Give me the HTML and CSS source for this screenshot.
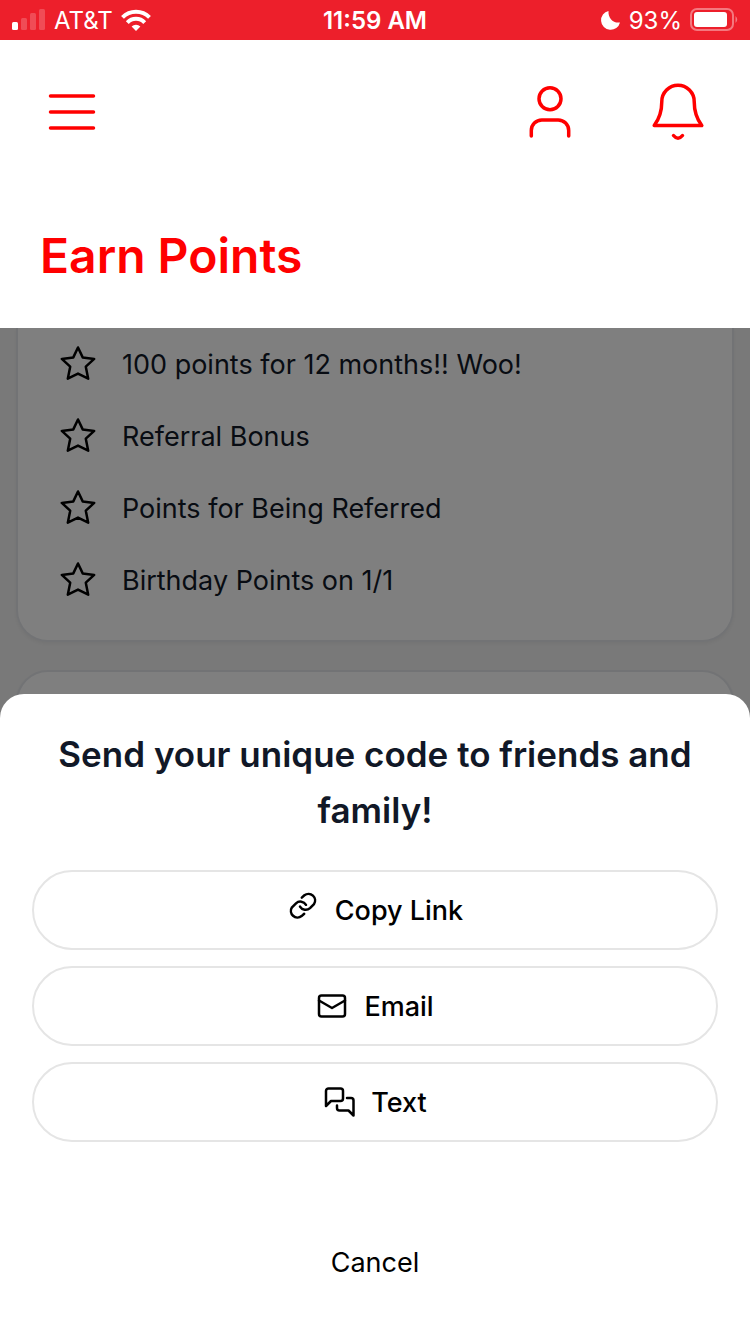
FILE: index.html
```
<!DOCTYPE html>
<html lang="en">
<head>
    <meta charset="UTF-8">
    <meta name="viewport" content="width=device-width, initial-scale=1.0">
    <title>Earn Points</title>
    <link rel="stylesheet" href="styles.css">
</head>
<body>
    <svg class="sprite" aria-hidden="true">
        <symbol id="star" viewBox="0 0 40 40">
            <path d="M20 3.5l4.7 9.9 11.5 1.5-8.4 7.8 2.4 12L20 29.6 9.8 34.700l2.400-12-8.400-7.800 11.500-1.500z" fill="none" stroke="currentColor" stroke-width="2.5" stroke-linejoin="round"/>
        </symbol>
    </svg>

    <div class="status-bar">
        <div class="status-left">
            <svg class="signal" viewBox="0 0 34 22" fill="#fff">
                <rect x="0" y="13" width="6" height="8" rx="1.5"/>
                <g opacity="0.2">
                    <rect x="9" y="9" width="6" height="12" rx="1.5"/>
                    <rect x="18" y="4" width="6" height="17" rx="1.5"/>
                    <rect x="27" y="0" width="6" height="21" rx="1.5"/>
                </g>
            </svg>
            <span>AT&amp;T</span>
            <svg class="wifi" viewBox="0 0 30 22" fill="none" stroke="#fff" stroke-width="4">
                <path d="M1.5 8.3a19 19 0 0 1 27 0"/>
                <path d="M6.3 13.600a12 12 0 0 1 17.400 0"/>
                <path d="M10.600 17.600a6.200 6.200 0 0 1 8.800 0L15 22z" fill="#fff" stroke="none"/>
            </svg>
        </div>
        <span class="status-time">11:59 AM</span>
        <div class="status-right">
            <svg class="moon" viewBox="0 0 20 20" fill="#fff">
                <path d="M7.500 0.900C7 8 12 13.500 19 12.500A9.600 9.600 0 1 1 7.500 0.900z"/>
            </svg>
            <span>93%</span>
            <svg class="battery" viewBox="0 0 48 24">
                <rect x="1" y="1" width="42" height="21" rx="6" fill="none" stroke="#fff" stroke-opacity="0.4" stroke-width="2"/>
                <rect x="4" y="4" width="33" height="15" rx="3" fill="#fff"/>
                <path d="M45.500 8q3.500 3.500 0 7z" fill="#fff" fill-opacity="0.4"/>
            </svg>
        </div>
    </div>

    <header class="header">
        <nav class="nav">
            <button class="icon-button" aria-label="Menu">
                <svg viewBox="0 0 64 64">
                    <path d="M10.500 16h43M10.500 32h43M10.500 48h43"/>
                </svg>
            </button>
            <div class="nav-right">
                <button class="icon-button" aria-label="Profile">
                    <svg viewBox="0 0 64 64">
                        <circle cx="32" cy="18.700" r="11"/>
                        <path d="M13.300 56v-5.500a10.500 10.500 0 0 1 10.500-10.500h16.400a10.500 10.500 0 0 1 10.500 10.500V56"/>
                    </svg>
                </button>
                <button class="icon-button" aria-label="Notifications">
                    <svg viewBox="0 0 64 64">
                        <path d="M8.200 45.500C14 38 15.800 29 15.800 21.500a16.200 16.200 0 0 1 32.400 0c0 7.500 1.800 16.500 7.600 24z"/>
                        <path d="M27.500 55.500q4.500 5.500 9 0"/>
                    </svg>
                </button>
            </div>
        </nav>
        <h1>Earn Points</h1>
    </header>

    <main class="content">
        <ul class="card points-list">
            <li><svg class="star"><use href="#star"/></svg>100 points for 12 months!! Woo!</li>
            <li><svg class="star"><use href="#star"/></svg>Referral Bonus</li>
            <li><svg class="star"><use href="#star"/></svg>Points for Being Referred</li>
            <li><svg class="star"><use href="#star"/></svg>Birthday Points on 1/1</li>
        </ul>
        <div class="card next-card"></div>
        <div class="overlay"></div>
    </main>

    <section class="sheet" role="dialog" aria-labelledby="sheetTitle">
        <h2 id="sheetTitle">Send your unique code to friends and family!</h2>
        <div class="share-options">
            <button class="share-button">
                <svg viewBox="0 4 32 32">
                    <path d="M14.800 7.600l2.600-2.300a6.600 6.600 0 0 1 9.600 8.800l-4 4a6.500 6.500 0 0 1-10-1.500"/>
                    <path d="M17.200 23.800l-2.600 2.300a6.600 6.600 0 0 1-9.600-8.800l4-4a6.500 6.500 0 0 1 10 1.500"/>
                </svg>
                Copy Link
            </button>
            <button class="share-button">
                <svg viewBox="0 0 32 32">
                    <rect x="3" y="5.500" width="26" height="21" rx="2.500"/>
                    <path d="M3 10.500l13 7.500 13-7.500"/>
                </svg>
                Email
            </button>
            <button class="share-button">
                <svg viewBox="0 0 32 32">
                    <path d="M3 20V5a2.500 2.500 0 0 1 2.500-2.500h12A2.500 2.500 0 0 1 20 5v7.500a2.500 2.500 0 0 1-2.500 2.500H8z"/>
                    <path d="M24 12h4a2.500 2.500 0 0 1 2.500 2.500v15L25.500 24.500H16.500a2.500 2.500 0 0 1-2.500-2.500v-2.500"/>
                </svg>
                Text
            </button>
        </div>
        <button class="cancel-button">Cancel</button>
    </section>
</body>
</html>
```
FILE: styles.css
```
* {
    box-sizing: border-box;
}

body {
    margin: 0;
    min-height: 100vh;
    display: flex;
    flex-direction: column;
    background-color: #fff;
    font-family: Inter, "Liberation Sans", sans-serif;
    font-size: 27px;
    color: #111827;
}

button {
    font: inherit;
    color: #000;
    background: none;
    border: none;
    padding: 0;
    cursor: pointer;
}

svg {
    display: block;
    flex-shrink: 0;
    overflow: visible;
}

.sprite {
    position: absolute;
    width: 0;
    height: 0;
}

/* status bar */
.status-bar {
    display: grid;
    grid-template-columns: 1fr auto 1fr;
    align-items: center;
    height: 40px;
    padding: 0 12px;
    background-color: #ed1f2b;
    color: #fff;
    font-size: 24px;
}

.status-left,
.status-right {
    display: flex;
    align-items: center;
    gap: 8px;
}

.status-right {
    justify-content: flex-end;
}

.status-time {
    font-weight: 600;
}

.signal {
    width: 34px;
    height: 22px;
}

.wifi {
    width: 30px;
    height: 22px;
}

.moon {
    width: 20px;
    height: 20px;
}

.battery {
    width: 48px;
    height: 24px;
}

/* header */
.header {
    height: 288px;
    padding: 40px;
}

.nav,
.nav-right {
    display: flex;
    justify-content: space-between;
}

.nav-right {
    gap: 64px;
}

.icon-button svg {
    width: 64px;
    height: 64px;
    fill: none;
    stroke: #f00;
    stroke-width: 3.5;
    stroke-linecap: round;
    stroke-linejoin: round;
}

h1 {
    margin: 80px 0 0;
    font-size: 48px;
    font-weight: 600;
    line-height: 64px;
    color: #f00;
}

/* points */
.content {
    position: relative;
    flex: 1;
    padding: 0 16px;
    overflow: hidden;
    background-color: #f3f3f3;
}

.card {
    background-color: #fff;
    border: 2px solid #e5e7eb;
    border-radius: 32px;
    box-shadow: 0 2px 4px rgba(0, 0, 0, 0.05);
}

.points-list {
    margin: 0 0 28px;
    padding: 0 40px 24px;
    border-top: none;
    border-top-left-radius: 0;
    border-top-right-radius: 0;
    list-style: none;
}

.points-list li {
    display: flex;
    align-items: center;
    gap: 24px;
    height: 72px;
}

.star {
    width: 40px;
    height: 40px;
    color: #000;
}

.next-card {
    height: 400px;
}

.overlay {
    position: absolute;
    inset: 0;
    background-color: rgba(0, 0, 0, 0.5);
}

/* bottom sheet */
.sheet {
    position: fixed;
    left: 0;
    right: 0;
    bottom: 0;
    padding: 32px;
    background-color: #fff;
    border-radius: 24px 24px 0 0;
    text-align: center;
}

h2 {
    margin: 0 0 32px;
    font-size: 35px;
    font-weight: 600;
    line-height: 56px;
}

.share-options {
    display: flex;
    flex-direction: column;
    gap: 16px;
    margin-bottom: 80px;
}

.share-button {
    display: flex;
    align-items: center;
    justify-content: center;
    gap: 16px;
    height: 80px;
    border: 2px solid #e5e5e5;
    border-radius: 40px;
    font-weight: 500;
}

.share-button svg {
    width: 32px;
    height: 32px;
    fill: none;
    stroke: #000;
    stroke-width: 2.5;
    stroke-linecap: round;
    stroke-linejoin: round;
}

.cancel-button {
    width: 100%;
    height: 80px;
}
```
